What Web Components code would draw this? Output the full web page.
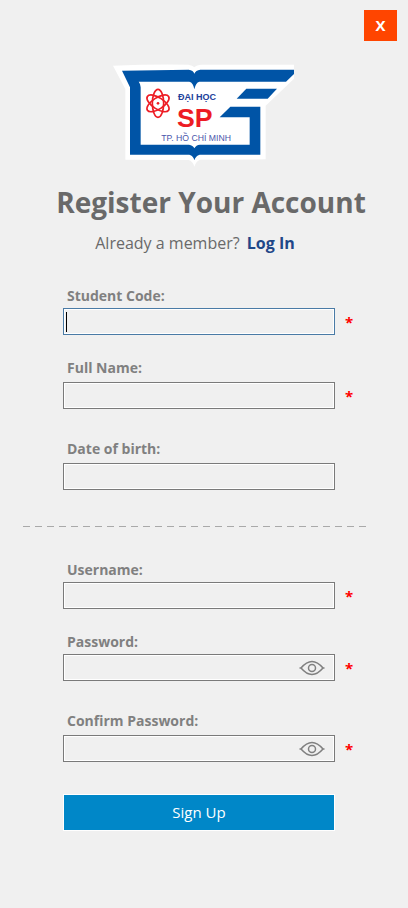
<!DOCTYPE html>
<html lang="en">
<head>
<meta charset="utf-8">
<meta name="viewport" content="width=device-width, initial-scale=1">
<title>Register Your Account</title>
<style>
body { margin: 0; background: #f0f0f0; font-family: "Open Sans", "Noto Sans", sans-serif; color: #696969; }
</style>
</head>
<body>
<register-page>
  <close-button slot="top"></close-button>
  <school-logo slot="top"></school-logo>
  <page-heading slot="top">Register Your Account</page-heading>
  <login-prompt slot="top">Already a member?</login-prompt>
  <form-section slot="form">
    <form-field label="Student Code:" required active></form-field>
    <form-field label="Full Name:" required roomy></form-field>
    <form-field label="Date of birth:" roomy apart></form-field>
  </form-section>
  <dashed-rule slot="form"></dashed-rule>
  <form-section slot="form">
    <form-field label="Username:" required></form-field>
    <form-field label="Password:" type="password" required></form-field>
    <form-field label="Confirm Password:" type="password" required roomy apart></form-field>
  </form-section>
  <submit-button slot="form">Sign Up</submit-button>
</register-page>
<script>
function define(name, markup, setup) {
  const template = document.createElement('template');
  template.innerHTML = markup;
  customElements.define(name, class extends HTMLElement {
    constructor() {
      super();
      this.attachShadow({ mode: 'open' }).append(template.content.cloneNode(true));
    }
    connectedCallback() {
      if (setup) setup(this, this.shadowRoot);
    }
  });
}

define('register-page', `
<style>
:host { display: block; padding: 10px 0 72px; }
header, main { display: flex; flex-direction: column; }
</style>
<header><slot name="top"></slot></header>
<main><slot name="form"></slot></main>`);

define('close-button', `
<style>
:host { display: flex; justify-content: flex-end; padding-right: 11px; }
button { width: 33px; height: 31px; padding: 0; border: 0; background: #ff4500; color: #fff; font: bold 15px/31px "Open Sans", sans-serif; cursor: pointer; }
</style>
<button type="button" aria-label="Close">X</button>`);

define('school-logo', `
<style>
:host { display: flex; justify-content: center; padding: 23px 2px 0 0; }
svg { width: 182px; height: 103px; }
text { font-family: "Liberation Sans", sans-serif; }
</style>
<svg viewBox="36 28 546 309" role="img" aria-label="School logo">
  <path fill="#fff" d="M39 33 Q160 28 265 30 Q278 32 283 38 Q290 30 305 30 L582 30 L582 72 L497 153 L497 314 L300 315 Q288 319 283 336 Q278 319 266 316 L76 315 L76 103 Z"/>
  <path fill="#0054a6" d="M66 48 L266 45 Q280 47 283 57 Q287 46 301 45 L582 45 L582 58 L558 81 L298 81 Q287 84 283 104 Q280 84 268 81 L116 81 Q122 88 122 98 L122 270 L267 270 Q279 272 283 281 Q288 271 300 270 L449 270 L449 188 L359 188 L391 156 L481 156 L481 300 L299 300 Q287 303 283 317 Q280 303 268 300 L90 300 L90 98 Z"/>
  <path fill="#0054a6" d="M439 102 L531 102 L503 132 L410 132 Z"/>
  <g fill="none" stroke="#ed1c24" stroke-width="5">
    <ellipse cx="174" cy="146" rx="17" ry="42"/>
    <ellipse cx="174" cy="146" rx="17" ry="38" transform="rotate(57 174 146)"/>
    <ellipse cx="174" cy="146" rx="17" ry="38" transform="rotate(-57 174 146)"/>
  </g>
  <circle cx="174" cy="146" r="4" fill="#ed1c24"/>
  <text x="234" y="135" font-size="27" font-weight="bold" fill="#21409a">ĐẠI HỌC</text>
  <text x="231" y="217" font-size="80" font-weight="bold" fill="#ed1c24">SP</text>
  <text x="184" y="258" font-size="26" fill="#4a55ab">TP. HỒ CHÍ MINH</text>
</svg>`);

define('page-heading', `
<style>
:host { display: block; padding: 15px 0 0 14px; text-align: center; }
h1 { margin: 0; font-size: 28px; line-height: 40px; font-weight: 700; white-space: nowrap; }
</style>
<h1><slot></slot></h1>`);

define('login-prompt', `
<style>
:host { display: block; padding: 9px 18px 31px 0; text-align: center; font-size: 16px; line-height: 24px; }
a { margin-left: 3px; color: #1f4788; font-weight: 700; text-decoration: none; }
</style>
<slot></slot> <a href="#login">Log In</a>`);

define('form-section', `
<style>
:host { display: flex; flex-direction: column; gap: 23px; padding: 0 54px 0 63px; }
</style>
<slot></slot>`);

define('form-field', `
<style>
:host { display: grid; grid-template-columns: 1fr 9px; column-gap: 10px; row-gap: 2px; }
:host([roomy]) { row-gap: 4px; }
:host([apart]) { padding-top: 7px; }
label { grid-column: 1 / -1; padding-left: 4px; color: #808080; font-size: 14px; line-height: 20px; font-weight: 700; }
.box { display: flex; align-items: center; height: 23px; border: 1px solid #7a7a7a; outline: 1px solid #fff; outline-offset: -2px; padding: 1px; }
:host([active]) .box { border-color: #4a7ba6; }
.caret { width: 1px; height: 20px; margin-left: 1px; background: #000; }
input { flex: 1; min-width: 0; height: 21px; padding: 0 4px; border: 0; outline: 0; background: transparent; color: #333; font: 14px "Open Sans", sans-serif; caret-color: transparent; }
button { display: flex; margin-right: 8px; padding: 0; border: 0; background: none; cursor: pointer; }
svg { width: 26px; height: 16px; }
.star { align-self: center; height: 20px; color: #f00; font-size: 15px; line-height: 20px; font-weight: 700; }
[hidden] { display: none; }
</style>
<label for="control"></label>
<div class="box">
  <span class="caret" hidden></span>
  <input id="control">
  <button type="button" aria-label="Show password" hidden>
    <svg viewBox="0 0 26 16" fill="none" stroke="#808080" stroke-width="1.5">
      <path d="M0.5 8H2C5 4.500 9 1.500 13 1.500S21 4.500 24 8H25.500M2 8C5 11.500 9 14.500 13 14.500S21 11.500 24 8"/>
      <circle cx="13" cy="8" r="3.500"/>
    </svg>
  </button>
</div>
<span class="star" hidden>*</span>`, (host, root) => {
  const input = root.querySelector('input');
  root.querySelector('label').textContent = host.getAttribute('label');
  input.type = host.getAttribute('type') || 'text';
  input.required = host.hasAttribute('required');
  root.querySelector('.star').hidden = !input.required;
  root.querySelector('.caret').hidden = !host.hasAttribute('active');
  const eye = root.querySelector('button');
  eye.hidden = input.type !== 'password';
  eye.onclick = () => { input.type = input.type === 'password' ? 'text' : 'password'; };
});

define('dashed-rule', `
<style>
:host { display: block; height: 1px; margin: 36px 41px 33px 23px; background: repeating-linear-gradient(90deg, #a9a9a9 0 7px, transparent 7px 12px); }
</style>`);

define('submit-button', `
<style>
:host { display: flex; padding: 32px 73px 0 63px; }
button { flex: 1; height: 37px; padding: 0; border: 1px solid #fff; background: #0087c8; color: #fff; font: 15px/35px "Open Sans", sans-serif; cursor: pointer; }
</style>
<button type="submit"><slot></slot></button>`);
</script>
</body>
</html>
